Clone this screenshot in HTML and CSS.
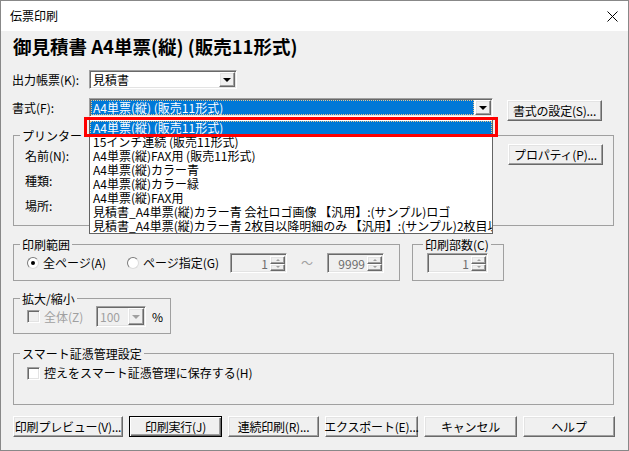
FILE: index.html
```html
<!DOCTYPE html>
<html>
<head>
	<meta charset="UTF-8">
	<title>伝票印刷</title>
	<link rel="stylesheet" href="styles.css">
</head>

<body>

<div class="window">
	<div class="titlebar">
		<span class="title">伝票印刷</span>
		<svg class="close" width="11" height="11" viewBox="0 0 11 11"><path d="M0.5 0.5 L10.5 10.5 M10.5 0.5 L0.5 10.5" stroke="#000" stroke-width="1" fill="none"/></svg>
	</div>

	<div class="content">
		<h1 class="heading">御見積書 A4単票(縦) (販売11形式)</h1>

		<div class="row row-output">
			<span class="label">出力帳票(K):</span>
			<div class="combo combo-output">
				<span class="combo-text">見積書</span>
				<span class="drop-btn"><i class="tri"></i></span>
			</div>
		</div>

		<div class="row row-format">
			<span class="label">書式(F):</span>
			<div class="combo combo-format">
				<span class="combo-text sel">A4単票(縦) (販売11形式)</span>
				<span class="drop-btn"><i class="tri"></i></span>
			</div>
			<span class="btn btn-side">書式の設定(S)...</span>

			<!-- 開いているドロップダウン -->
			<ul class="droplist">
				<li class="on">A4単票(縦) (販売11形式)</li>
				<li>15インチ連続 (販売11形式)</li>
				<li>A4単票(縦)FAX用 (販売11形式)</li>
				<li>A4単票(縦)カラー青</li>
				<li>A4単票(縦)カラー緑</li>
				<li>A4単票(縦)FAX用</li>
				<li>見積書_A4単票(縦)カラー青 会社ロゴ画像 【汎用】:(サンプル)ロゴ</li>
				<li>見積書_A4単票(縦)カラー青 2枚目以降明細のみ 【汎用】:(サンプル)2枚目以降明細</li>
			</ul>
			<!-- 赤枠 -->
			<div class="mark"></div>
		</div>

		<fieldset class="group group-printer">
			<legend>プリンター</legend>
			<div class="printer-body">
				<div class="printer-labels">
					<span>名前(N):</span>
					<span>種類:</span>
					<span>場所:</span>
				</div>
				<span class="btn btn-side btn-prop">プロパティ(P)...</span>
			</div>
		</fieldset>

		<div class="group-row">
			<fieldset class="group group-range">
				<legend>印刷範囲</legend>
				<div class="range-body">
					<span class="radio-item item-all"><i class="radio checked"></i>全ページ(A)</span>
					<span class="radio-item item-page"><i class="radio"></i>ページ指定(G)</span>
					<div class="spin">
						<span class="spin-val">1</span>
						<span class="spin-btns"><b class="up"></b><b class="down"></b></span>
					</div>
					<span class="tilde">～</span>
					<div class="spin">
						<span class="spin-val">9999</span>
						<span class="spin-btns"><b class="up"></b><b class="down"></b></span>
					</div>
				</div>
			</fieldset>

			<fieldset class="group group-copies">
				<legend>印刷部数(C)</legend>
				<div class="copies-body">
					<div class="spin spin-copies">
						<span class="spin-val">1</span>
						<span class="spin-btns"><b class="up"></b><b class="down"></b></span>
					</div>
				</div>
			</fieldset>
		</div>

		<fieldset class="group group-scale">
			<legend>拡大/縮小</legend>
			<div class="scale-body">
				<span class="check-item disabled"><i class="check"></i>全体(Z)</span>
				<div class="combo combo-scale disabled">
					<span class="combo-text">100</span>
					<span class="drop-btn"><i class="tri"></i></span>
				</div>
				<span class="percent">%</span>
			</div>
		</fieldset>

		<fieldset class="group group-smart">
			<legend>スマート証憑管理設定</legend>
			<div class="smart-body">
				<span class="check-item"><i class="check"></i>控えをスマート証憑管理に保存する(H)</span>
			</div>
		</fieldset>

		<div class="buttons">
			<span class="btn b-preview">印刷プレビュー(V)...</span>
			<span class="btn b-print default">印刷実行(J)</span>
			<span class="btn b-cont">連続印刷(R)...</span>
			<span class="btn b-export">エクスポート(E)...</span>
			<span class="btn b-cancel">キャンセル</span>
			<span class="btn b-help">ヘルプ</span>
		</div>
	</div>
</div>

</body>
</html>
```

FILE: styles.css
```css
*{ margin: 0; padding: 0; box-sizing: border-box;}
li{ list-style: none;}
i, b{ display: block; font-style: normal;}

body{ font: 12px/14px "Noto Sans CJK JP", sans-serif; color: #000; background: #fff;}

.window{ width: 629px; height: 451px; border: 1px solid #888; background: #f0f0f0; display: flex; flex-direction: column;}
.titlebar{ height: 30px; flex: none; background: #fff; display: flex; align-items: center; justify-content: space-between; padding: 0 10px 0 9px;}
.title{ font-size: 12px;}

.content{ padding: 0 12px 0 11px; display: flex; flex-direction: column; align-items: flex-start;}
.heading{ margin-top: 3px; font-size: 18.5px; line-height: 24px; font-weight: bold; margin-left: 1px;}

.row{ display: flex; align-items: center;}
.row-output{ margin-top: 12px;}
.row-format{ margin-top: 9px; align-items: flex-start; position: relative;}
.label{ width: 77px; line-height: 19px;}

/* 凹んだ枠 */
.combo, .spin, .check{ border: 1px solid; border-color: #a0a0a0 #fff #fff #a0a0a0; box-shadow: inset 1px 1px 0 #696969, inset -1px -1px 0 #e3e3e3;}
/* 浮き出たボタン */
.btn, .drop-btn, .spin-btns b{ border: 1px solid; border-color: #fff #696969 #696969 #fff; box-shadow: inset -1px -1px 0 #a0a0a0, inset 1px 1px 0 #e3e3e3; background: #f0f0f0;}

.combo{ height: 19px; background: #fff; display: flex; padding: 1px;}
.combo-output{ width: 148px;}
.combo-format{ width: 404px;}
.combo-text{ flex: 1; padding-left: 2px; line-height: 15px; white-space: nowrap; overflow: hidden;}
.combo-text.sel{ background: #0078d7; color: #fff; outline: 1px dotted #e6c68e; outline-offset: -1px; margin-right: 1px;}
.drop-btn{ width: 16px; height: 15px; display: flex; align-items: center; justify-content: center;}
.tri{ width: 0; height: 0; border-left: 4px solid transparent; border-right: 4px solid transparent; border-top: 4px solid #000; margin-top: 1px;}

.btn{ display: flex; align-items: center; justify-content: center; height: 21px; white-space: nowrap; letter-spacing: -0.2px;}
.btn-side{ width: 95px; margin-left: 14px; margin-top: 2px;}

.droplist{ position: absolute; z-index: 2; left: 77px; top: 19px; width: 404px; height: 117px; border: 1px solid #646464; background: #fff; padding-top: 3px;}
.droplist li{ height: 14px; line-height: 14px; padding-left: 3px; white-space: nowrap; overflow: hidden;}
.droplist li.on{ background: #0078d7; color: #fff; outline: 1px dotted #e6c68e; outline-offset: -1px;}
.mark{ position: absolute; z-index: 3; left: 72px; top: 19px; width: 414px; height: 20px; border: 3px solid #f00;}

/* グループ枠 */
.group{ border: 1px solid #a0a0a0; margin-left: 1px; min-width: 0;}
.group legend{ margin-left: 6px; padding: 0 2px; line-height: 15px;}

.group-printer{ width: 601px; margin-top: 7px;}
.printer-body{ height: 82px; display: flex; justify-content: space-between; align-items: flex-start;}
.printer-labels{ display: flex; flex-direction: column; gap: 11px; padding: 6px 0 0 11px;}
.btn-prop{ margin: 1px 10px 0 0;}

.group-row{ display: flex; margin-top: 11px;}
.group-range{ width: 387px;}
.group-copies{ width: 92px; margin-left: 12px;}
.group-copies legend{ margin-left: 10px;}
.range-body, .copies-body{ height: 20px; margin: 1px 0 7px; display: flex; align-items: center;}
.range-body{ padding-left: 13px;}
.copies-body{ padding-left: 14px;}

.radio-item, .check-item{ display: flex; align-items: center; gap: 4px; white-space: nowrap;}
.item-all{ width: 100px;}
.item-page{ width: 103px;}
.radio{ width: 12px; height: 12px; border-radius: 50%; border: 1px solid; border-color: #7a7a7a #dcdcdc #dcdcdc #7a7a7a; background: #fff; display: flex; align-items: center; justify-content: center;}
.radio.checked::after{ content: ""; width: 4px; height: 4px; border-radius: 50%; background: #000;}

.spin{ width: 57px; height: 20px; display: flex; padding: 2px 1px 1px 2px; background: #f0f0f0;}
.spin-copies{ width: 61px;}
.spin-val{ flex: 1; text-align: right; color: #6d6d6d; line-height: 15px; padding-right: 2px;}
.spin-btns{ width: 15px; display: flex; flex-direction: column;}
.spin-btns b{ flex: 1; display: flex; align-items: center; justify-content: center;}
.spin-btns .up::after{ content: ""; border-left: 2px solid transparent; border-right: 2px solid transparent; border-bottom: 2px solid #a0a0a0;}
.spin-btns .down::after{ content: ""; border-left: 2px solid transparent; border-right: 2px solid transparent; border-top: 2px solid #a0a0a0;}
.tilde{ width: 40px; text-align: center; color: #a0a0a0;}

.group-scale{ width: 158px; margin-top: 10px;}
.scale-body{ height: 21px; margin-bottom: 6px; padding-left: 13px; display: flex; align-items: center;}
.check{ width: 13px; height: 13px; background: #fff;}
.disabled{ color: #a0a0a0;}
.disabled .check{ background: #f0f0f0;}
.check-item.disabled{ width: 69px;}
.combo-scale{ width: 50px; height: 21px; background: #f0f0f0;}
.combo-scale .combo-text{ line-height: 17px;}
.combo-scale .drop-btn{ height: 17px;}
.combo-scale .tri{ border-top-color: #a0a0a0;}
.percent{ margin-left: 6px;}

.group-smart{ width: 601px; margin-top: 12px;}
.smart-body{ height: 43px; padding: 5px 0 0 13px;}

.buttons{ display: flex; justify-content: space-between; width: 602px; margin: 11px 0 0 1px;}
.b-preview{ width: 110px;}
.b-print{ width: 93px;}
.b-cont{ width: 91px;}
.b-export{ width: 93px;}
.b-cancel{ width: 93px;}
.b-help{ width: 92px;}
.btn.default{ border: 1px solid #000; box-shadow: inset 1px 1px 0 #fff, inset -1px -1px 0 #696969, inset -2px -2px 0 #a0a0a0;}
```
